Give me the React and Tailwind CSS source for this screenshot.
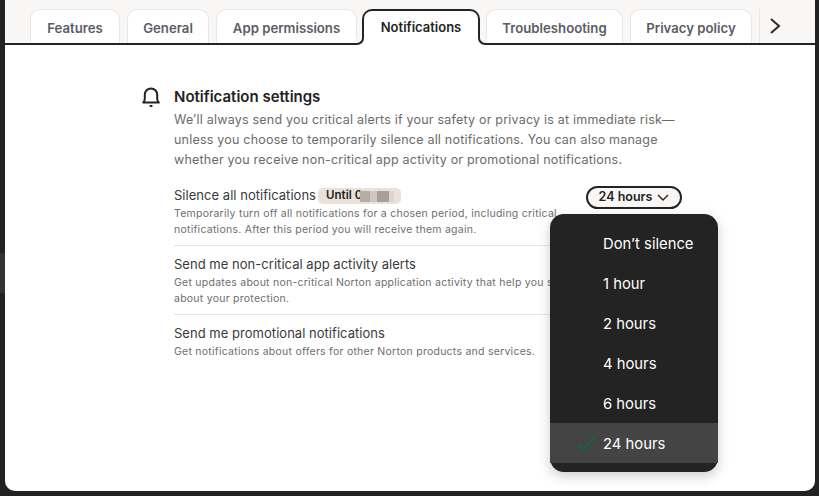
const tabs = [
  { label: 'Features', width: 'w-[90px]' },
  { label: 'General', width: 'w-[82px]' },
  { label: 'App permissions', width: 'w-[141px]' },
  { label: 'Notifications', width: 'w-[118px]', active: true },
  { label: 'Troubleshooting', width: 'w-[137px]' },
  { label: 'Privacy policy', width: 'w-[122px]' },
]

const hours = ["Don\u2019t silence", '1 hour', '2 hours', '4 hours', '6 hours', '24 hours']

function Tab({ tab }) {
  if (tab.active) {
    return (
      <div className={`relative z-10 -mb-[2px] flex h-[36px] ${tab.width} items-start justify-center rounded-t-[10px] border-2 border-b-0 border-[#242424] bg-white pt-[7px] text-[13px] font-semibold text-[#242424]`}>
        {tab.label}
        <div className="absolute -left-[8px] bottom-0 h-[8px] w-[8px] bg-white">
          <div className="h-full w-full rounded-br-[7px] border-r-2 border-b-2 border-[#242424] bg-[#f9f7f5]"></div>
        </div>
        <div className="absolute -right-[8px] bottom-0 h-[8px] w-[8px] bg-white">
          <div className="h-full w-full rounded-bl-[7px] border-b-2 border-l-2 border-[#242424] bg-[#f9f7f5]"></div>
        </div>
      </div>
    )
  }
  return (
    <div className={`flex h-[34px] ${tab.width} items-start justify-center rounded-t-[10px] border border-b-0 border-[#e9e7e5] bg-white pt-[9px] text-[13.2px] font-semibold text-[#5c5c66]`}>
      {tab.label}
    </div>
  )
}

function Row({ title, children, divider }) {
  return (
    <div className={divider ? 'border-b border-[#e4e4e4] pb-[7px]' : ''}>
      <div className="flex h-[18px] items-center text-[13px] tracking-[0.03px] text-[#3a3a3a]">{title}</div>
      <p className="mt-[1px] text-[10.5px] leading-[16px] tracking-[0.25px] text-[#6e6e6e]">{children}</p>
    </div>
  )
}

export default function App() {
  return (
    <div className="flex h-[496px] w-[819px] bg-[#222222] font-['Inter',sans-serif]">
      <div className="flex w-[5px] shrink-0 flex-col">
        <div className="h-[253px]"></div>
        <div className="h-[40px] bg-[#333333]"></div>
      </div>

      <div className="mr-[4px] mb-[5px] flex min-w-0 flex-1 flex-col overflow-hidden rounded-b-[10px] bg-white">
        <div className="flex h-[45px] shrink-0 items-end border-b-2 border-[#242424] bg-[#f9f7f5] pl-[25px]">
          <div className="flex items-end gap-[7px]">
            <Tab tab={tabs[0]} />
            <Tab tab={tabs[1]} />
            <div className="flex items-end gap-[5px]">
              <Tab tab={tabs[2]} />
              <Tab tab={tabs[3]} />
            </div>
            <div className="-ml-[1px]">
              <Tab tab={tabs[4]} />
            </div>
            <Tab tab={tabs[5]} />
          </div>
          <div className="ml-[7px] flex h-[34px] w-[40px] items-start border-l border-[#e9e7e5] pt-[8px] pl-[9px]">
            <svg width="12" height="18" viewBox="0 0 12 18" fill="none" stroke="#2a2a2a" strokeWidth="2">
              <path d="M2 2l8 7-8 7" />
            </svg>
          </div>
        </div>

        <div className="relative flex flex-1 pt-[42px] pl-[137px]">
          <svg className="shrink-0" width="18" height="20" viewBox="0 0 18 20" fill="none" stroke="#222222" strokeWidth="2">
            <path d="M1.2 15.6c1.2-.9 1.6-2.2 1.6-4V7.6a6.2 6.2 0 0 1 12.4 0v4c0 1.8.4 3.1 1.6 4z" strokeLinejoin="round" />
            <path d="M7.6 19h2.8" />
          </svg>
          <div className="ml-[14px] w-[508px]">
            <h1 className="text-[15px] leading-[20px] font-semibold text-[#222222]">Notification settings</h1>
            <p className="mt-[3px] text-[12.5px] leading-[20px] tracking-[0.21px] text-[#6b6b6b]">
              We{'\u2019'}ll always send you critical alerts if your safety or privacy is at immediate risk{'\u2014'}<br />
              unless you choose to temporarily silence all notifications. You can also manage<br />
              whether you receive non-critical app activity or promotional notifications.
            </p>

            <div className="mt-[17px] flex flex-col gap-[10px]">
              <Row
                divider
                title={
                  <>
                    Silence all notifications
                    <span className="ml-[2px] flex h-[16px] w-[83px] items-center rounded-[5px] bg-[#e9e1da] pl-[8px] text-[11.5px] font-semibold text-[#222222]">
                      Until 0
                      <span className="-ml-[2px] h-[11px] w-[10px] bg-[#b5aca6]"></span>
                      <span className="h-[11px] w-[7px] bg-[#cfc7c1]"></span>
                      <span className="h-[11px] w-[12px] bg-[#a89f98]"></span>
                      <span className="h-[11px] w-[5px] bg-[#ddd6d0]"></span>
                    </span>
                  </>
                }
              >
                Temporarily turn off all notifications for a chosen period, including critical<br />
                notifications. After this period you will receive them again.
              </Row>
              <Row divider title="Send me non-critical app activity alerts">
                Get updates about non-critical Norton application activity that help you stay<br />
                about your protection.
              </Row>
              <Row title="Send me promotional notifications">
                Get notifications about offers for other Norton products and services.
              </Row>
            </div>
          </div>

          <div className="absolute top-[141px] left-[581px] flex h-[23px] w-[96px] items-center justify-center gap-[5px] rounded-full border-2 border-[#242424] bg-[#f9f7f5] text-[12.5px] font-semibold text-[#222222]">
            24 hours
            <svg width="12" height="8" viewBox="0 0 12 8" fill="none" stroke="#222222" strokeWidth="1.4">
              <path d="M1 1l5 5 5-5" />
            </svg>
          </div>

          <div className="absolute top-[169px] left-[545px] w-[168px] rounded-[14px] bg-[#232323] py-[9px] shadow-[0_4px_12px_rgba(60,50,40,0.25)]">
            {hours.map((hour) => (
              <div
                key={hour}
                className={`flex h-[40px] items-center pt-[2px] pl-[53px] text-[14.8px] text-white ${hour === '24 hours' ? 'relative bg-[#444444]' : ''}`}
              >
                {hour === '24 hours' && (
                  <svg className="absolute top-[11px] left-[27px]" width="20" height="18" viewBox="0 0 20 18" fill="none" stroke="#0f6b3e" strokeWidth="1.6">
                    <path d="M1.5 10l5.5 6L18.5 1.5" />
                  </svg>
                )}
                {hour}
              </div>
            ))}
          </div>
        </div>
      </div>
    </div>
  )
}
